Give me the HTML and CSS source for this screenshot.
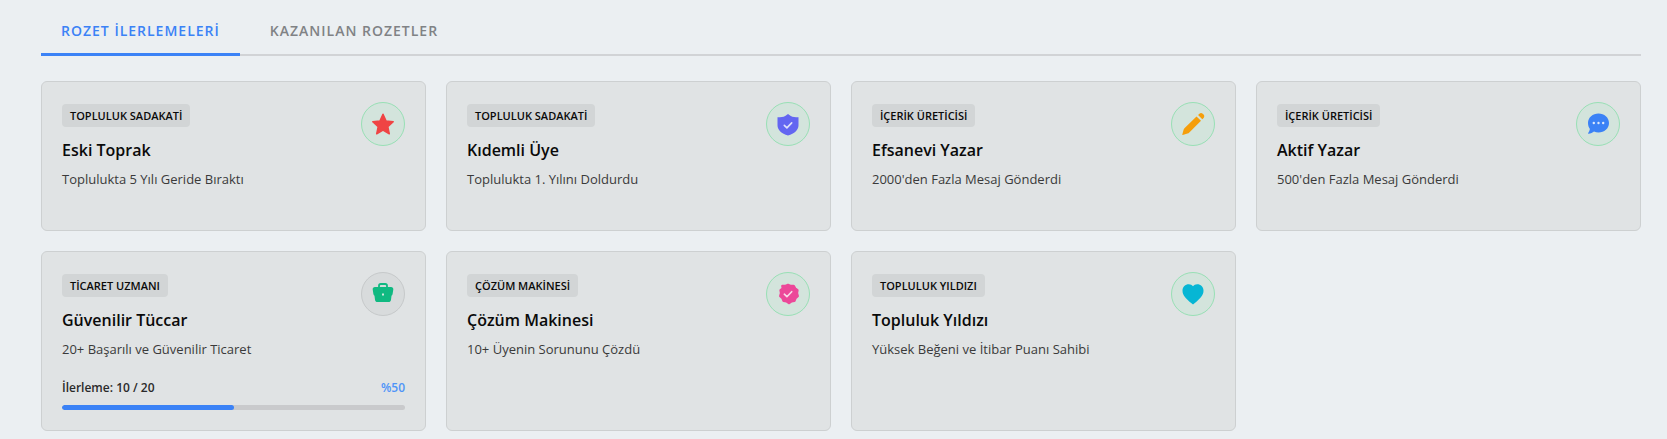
FILE: index.html
```html
<!DOCTYPE html>
<html lang="tr">
<head>
    <meta charset="UTF-8">
    <meta name="viewport" content="width=device-width, initial-scale=1.0">
    <title>Rozetler</title>
    <link rel="stylesheet" href="styles.css">
</head>
<body>
    <div class="tabs">
        <div class="tab active">ROZET İLERLEMELERİ</div>
        <div class="tab">KAZANILAN ROZETLER</div>
    </div>

    <div class="grid">
        <div class="card">
            <div class="card-top">
                <div>
                    <span class="badge">TOPLULUK SADAKATİ</span>
                    <h3>Eski Toprak</h3>
                    <p>Toplulukta 5 Yılı Geride Bıraktı</p>
                </div>
                <div class="icon earned">
                    <svg width="24" height="24" viewBox="0 0 24 24"><path fill="#ef4444" stroke="#ef4444" stroke-width="1.500" stroke-linejoin="round" d="M12 2.200l3 6.700 7.200.8-5.400 4.900 1.500 7.200-6.300-3.700-6.300 3.700 1.500-7.200-5.400-4.900 7.200-.8z"/></svg>
                </div>
            </div>
        </div>

        <div class="card">
            <div class="card-top">
                <div>
                    <span class="badge">TOPLULUK SADAKATİ</span>
                    <h3>Kıdemli Üye</h3>
                    <p>Toplulukta 1. Yılını Doldurdu</p>
                </div>
                <div class="icon earned">
                    <svg width="24" height="24" viewBox="0 -1 24 24"><path fill="#6366f1" d="M12 1l2.800 1.900c2 1 4.300 1.400 7.700 1.400v7.900c0 4.800-4 8.300-10.500 10.300C5.500 20.500 1.500 17 1.500 12.200V4.300c3.400 0 5.700-.4 7.700-1.400z"/><path fill="none" stroke="#dfe1fa" stroke-width="1.600" stroke-linecap="round" stroke-linejoin="round" d="M8.300 12.400l2.600 2.500 4.800-5"/></svg>
                </div>
            </div>
        </div>

        <div class="card">
            <div class="card-top">
                <div>
                    <span class="badge">İÇERİK ÜRETİCİSİ</span>
                    <h3>Efsanevi Yazar</h3>
                    <p>2000'den Fazla Mesaj Gönderdi</p>
                </div>
                <div class="icon earned">
                    <svg width="24" height="24" viewBox="0 0 24 24"><path fill="#f59e0b" d="M15.500 4.400l4.500 4.400L8.300 20.500c-.5.500-1.100.9-1.800 1.100l-4.800 1.400c-.3.100-.5-.2-.4-.5l1.300-4.800c.2-.7.600-1.300 1.100-1.800z"/><path fill="#f59e0b" d="M17.100 3l1.300-1.300c.9-.9 2.400-.9 3.300 0l.9.9c.9.900.9 2.400 0 3.300L21.300 7.200z"/></svg>
                </div>
            </div>
        </div>

        <div class="card">
            <div class="card-top">
                <div>
                    <span class="badge">İÇERİK ÜRETİCİSİ</span>
                    <h3>Aktif Yazar</h3>
                    <p>500'den Fazla Mesaj Gönderdi</p>
                </div>
                <div class="icon earned">
                    <svg width="24" height="24" viewBox="0 0 24 24"><path fill="#3b82f6" d="M12.500 1.500c5.700 0 10.500 4.100 10.500 9.500s-4.800 9.500-10.500 9.500c-1.600 0-3.100-.3-4.500-.9-1.400 1.100-3.300 2.100-5.500 2.100-.4 0-.6-.5-.3-.8.900-1.100 1.500-2.500 1.700-3.900C2.900 15.700 2 13.500 2 11c0-5.400 4.800-9.500 10.500-9.500z"/><circle cx="7.800" cy="11" r="1.200" fill="#dbe8fb"/><circle cx="12.500" cy="11" r="1.200" fill="#dbe8fb"/><circle cx="17.200" cy="11" r="1.200" fill="#dbe8fb"/></svg>
                </div>
            </div>
        </div>

        <div class="card">
            <div class="card-top">
                <div>
                    <span class="badge">TİCARET UZMANI</span>
                    <h3>Güvenilir Tüccar</h3>
                    <p>20+ Başarılı ve Güvenilir Ticaret</p>
                </div>
                <div class="icon">
                    <svg width="24" height="24" viewBox="0 0 24 24"><path fill="none" stroke="#10b981" stroke-width="1.800" d="M8 6V3.800c0-1 .8-1.800 1.800-1.800h4.400c1 0 1.800.8 1.800 1.800V6"/><path fill="#10b981" d="M4 5h16c1.500 0 2.500 1 2.300 2.500l-.7 4.500c-.1.800-.5 1.400-1.100 1.800l-.5 3.900c-.2 1.400-1.100 2.300-2.500 2.300h-11c-1.400 0-2.300-.9-2.500-2.300l-.5-3.900c-.6-.4-1-1-1.100-1.800l-.7-4.500C1.500 6 2.500 5 4 5z"/><rect x="11" y="11.500" width="2" height="2" fill="#cfe8dc"/></svg>
                </div>
            </div>
            <div class="progress">
                <div class="progress-text"><span>İlerleme: 10 / 20</span><span class="percent">%50</span></div>
                <div class="bar"><div class="bar-fill" style="width: 50%"></div></div>
            </div>
        </div>

        <div class="card">
            <div class="card-top">
                <div>
                    <span class="badge">ÇÖZÜM MAKİNESİ</span>
                    <h3>Çözüm Makinesi</h3>
                    <p>10+ Üyenin Sorununu Çözdü</p>
                </div>
                <div class="icon earned">
                    <svg width="24" height="24" viewBox="0 0 24 24"><path fill="#ec4899" stroke="#ec4899" stroke-width="2.500" stroke-linejoin="round" d="M12 3l2.700 1.100 2.900-.1 1.500 2.500 2.300 1.700-.5 2.900.8 2.900-2.200 2-1.100 2.700-2.900.5-2.500 1.800-2.500-1.800-2.900-.5-1.100-2.700-2.200-2 .8-2.900-.5-2.900 2.300-1.700L6.400 4l2.900.1z"/><path fill="none" stroke="#f8dbe9" stroke-width="1.600" stroke-linecap="round" stroke-linejoin="round" d="M8.300 12.200l2.600 2.500 4.800-5"/></svg>
                </div>
            </div>
        </div>

        <div class="card">
            <div class="card-top">
                <div>
                    <span class="badge">TOPLULUK YILDIZI</span>
                    <h3>Topluluk Yıldızı</h3>
                    <p>Yüksek Beğeni ve İtibar Puanı Sahibi</p>
                </div>
                <div class="icon earned">
                    <svg width="24" height="24" viewBox="0 0 24 24"><path fill="#06b6d4" d="M12 22.500l-1.500-1.200C5 16.600 1.500 13.400 1.500 8.700 1.500 5 4.300 2.300 7.800 2.300c1.700 0 3.300.8 4.200 2 .9-1.200 2.500-2 4.200-2 3.500 0 6.300 2.700 6.300 6.400 0 4.700-3.500 7.900-9 12.600z"/></svg>
                </div>
            </div>
        </div>
    </div>
</body>
</html>
```

FILE: styles.css
```css
body {
    margin: 0;
    padding: 14px 26px 8px 41px;
    background-color: #ebeff2;
    font-family: "Open Sans", "Noto Sans", sans-serif;
    color: #0a0a0a;
}

.tabs {
    display: flex;
    border-bottom: 2px solid #d1d3d6;
    margin-bottom: 25px;
}

.tab {
    padding: 8px 20px 13px;
    margin-bottom: -2px;
    margin-right: 10px;
    border-bottom: 3px solid transparent;
    font-size: 14px;
    font-weight: 600;
    line-height: 18px;
    letter-spacing: 1px;
    color: #808285;
}

.tab.active {
    color: #3b82f6;
    border-bottom-color: #3b82f6;
}

.grid {
    display: grid;
    grid-template-columns: repeat(4, 1fr);
    gap: 20px;
}

.card {
    display: flex;
    flex-direction: column;
    min-height: 108px;
    padding: 20px;
    background-color: #e0e3e4;
    border: 1px solid #cdd0d1;
    border-radius: 6px;
}

.card-top {
    display: flex;
    justify-content: space-between;
    align-items: flex-start;
}

.badge {
    display: inline-block;
    margin-top: 2px;
    padding: 0 8px;
    background-color: #d2d5d6;
    border-radius: 4px;
    font-size: 11px;
    font-weight: 600;
    line-height: 23px;
}

h3 {
    margin: 10px 0 0;
    font-size: 16px;
    font-weight: 600;
    line-height: 26px;
}

p {
    margin: 6px 0 0;
    font-size: 13px;
    line-height: 20px;
    color: #3a3a3a;
}

.icon {
    display: flex;
    align-items: center;
    justify-content: center;
    box-sizing: border-box;
    width: 44px;
    height: 44px;
    border: 1px solid #c6c9ca;
    border-radius: 50%;
    background-color: #d8dbdc;
}

.icon.earned {
    border-color: #98e0b5;
    background-color: #d3e4dc;
}

.progress {
    margin-top: 20px;
}

.progress-text {
    display: flex;
    justify-content: space-between;
    font-size: 12px;
    font-weight: 600;
    line-height: 18px;
    color: #2a2a2a;
}

.percent {
    color: #4f94f8;
}

.bar {
    margin-top: 8px;
    height: 5px;
    background-color: #c9cacc;
    border-radius: 3px;
    overflow: hidden;
}

.bar-fill {
    height: 100%;
    background-color: #3b82f6;
    border-radius: 3px;
}
```
